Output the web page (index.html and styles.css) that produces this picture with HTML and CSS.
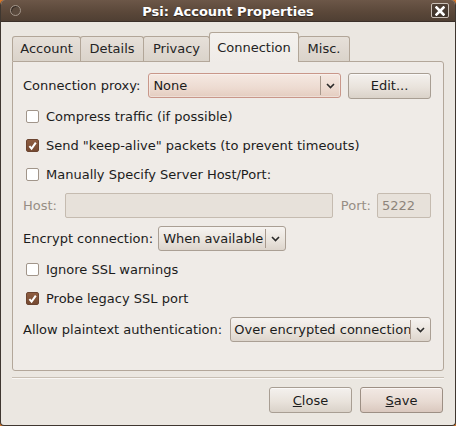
FILE: index.html
```html
<!DOCTYPE html>
<html>
<head>
<meta charset="utf-8">
<link rel="stylesheet" href="styles.css">
</head>
<body>
<div class="window">
  <div class="titlebar">
    <div class="tb-left"><span class="menu-btn"></span></div>
    <div class="title">Psi: Account Properties</div>
    <div class="tb-right">
      <span class="close-btn">
        <svg width="10" height="10" viewBox="0 0 10 10"><path d="M1.5 1.5 L8.5 8.5 M8.5 1.5 L1.5 8.5" stroke="#fff" stroke-width="2.6" stroke-linecap="square" fill="none"/></svg>
      </span>
    </div>
  </div>
  <div class="content">
    <div class="tabs">
      <div class="tab tab-account">Account</div>
      <div class="tab tab-details">Details</div>
      <div class="tab tab-privacy">Privacy</div>
      <div class="tab tab-connection active">Connection</div>
      <div class="tab tab-misc">Misc.</div>
    </div>
    <div class="panel">
      <div class="row">
        <span class="label">Connection proxy:</span>
        <div class="combo combo-hover grow">
          <span class="combo-text">None</span>
          <span class="combo-sep"></span>
          <span class="combo-arrow"><svg width="9" height="6" viewBox="0 0 9 6"><path d="M1 1 L4.5 4.5 L8 1" stroke="#2a2a2a" stroke-width="1.6" fill="none"/></svg></span>
        </div>
        <button class="btn edit-btn">Edit...</button>
      </div>
      <div class="check-row"><span class="box"></span><span>Compress traffic (if possible)</span></div>
      <div class="check-row"><span class="box checked"><svg width="12" height="12" viewBox="0 0 12 12"><path d="M2.6 6.2 L5 8.8 L9.6 2.4" stroke="#fff" stroke-width="2.2" fill="none"/></svg></span><span>Send "keep-alive" packets (to prevent timeouts)</span></div>
      <div class="check-row"><span class="box"></span><span>Manually Specify Server Host/Port:</span></div>
      <div class="row">
        <span class="label disabled">Host:</span>
        <div class="entry grow"></div>
        <span class="label disabled port-label">Port:</span>
        <div class="entry port-entry">5222</div>
      </div>
      <div class="row row-tight">
        <span class="label">Encrypt connection:</span>
        <div class="combo">
          <span class="combo-text">When available</span>
          <span class="combo-sep"></span>
          <span class="combo-arrow"><svg width="9" height="6" viewBox="0 0 9 6"><path d="M1 1 L4.5 4.5 L8 1" stroke="#2a2a2a" stroke-width="1.6" fill="none"/></svg></span>
        </div>
      </div>
      <div class="check-row"><span class="box"></span><span>Ignore SSL warnings</span></div>
      <div class="check-row"><span class="box checked"><svg width="12" height="12" viewBox="0 0 12 12"><path d="M2.6 6.2 L5 8.8 L9.6 2.4" stroke="#fff" stroke-width="2.2" fill="none"/></svg></span><span>Probe legacy SSL port</span></div>
      <div class="row">
        <span class="label">Allow plaintext authentication:</span>
        <div class="combo grow">
          <span class="combo-text">Over encrypted connection</span>
          <span class="combo-sep"></span>
          <span class="combo-arrow"><svg width="9" height="6" viewBox="0 0 9 6"><path d="M1 1 L4.5 4.5 L8 1" stroke="#2a2a2a" stroke-width="1.6" fill="none"/></svg></span>
        </div>
      </div>
    </div>
    <div class="separator"></div>
    <div class="actions">
      <button class="btn action-btn"><u>C</u>lose</button>
      <button class="btn action-btn default"><u>S</u>ave</button>
    </div>
  </div>
</div>
</body>
</html>
```
FILE: styles.css
```css
html, body {
  margin: 0;
  padding: 0;
}
body {
  width: 456px;
  height: 426px;
  background: #d9782a;
  font-family: "DejaVu Sans", sans-serif;
  font-size: 13px;
  color: #1c1c1c;
  overflow: hidden;
}
.window {
  width: 456px;
  height: 426px;
  box-sizing: border-box;
  border: 1px solid #3f3730;
  border-top: none;
  border-radius: 5px 5px 4px 4px;
  overflow: hidden;
  background: #ebe7e1;
  display: flex;
  flex-direction: column;
}
.titlebar {
  height: 22px;
  flex: none;
  background: linear-gradient(#6c5748, #5a4739 60%, #4f3f33);
  border-bottom: 1px solid #3b3029;
  box-sizing: border-box;
  display: grid;
  grid-template-columns: 1fr auto 1fr;
  align-items: center;
}
.tb-left {
  display: flex;
  padding-left: 9px;
}
.menu-btn {
  width: 9px;
  height: 9px;
  border-radius: 50%;
  border: 1px solid #a3968b;
  box-shadow: inset 1px 1px 0 rgba(0,0,0,0.4);
  background: #5b4a3d;
}
.title {
  color: #ffffff;
  font-weight: bold;
  font-size: 13px;
  text-shadow: 0 1px 1px rgba(0,0,0,0.5);
  padding-top: 1px;
}
.tb-right {
  display: flex;
  justify-content: flex-end;
  padding-right: 6px;
}
.close-btn {
  width: 18px;
  height: 15px;
  box-sizing: border-box;
  border: 1px solid #c9bfb6;
  border-radius: 2px;
  background: linear-gradient(#4e3f34, #3f332a);
  display: flex;
  align-items: center;
  justify-content: center;
}
.close-btn svg { display: block; }
.content {
  flex: 1;
  padding: 10px 11px 0 11px;
  display: flex;
  flex-direction: column;
}
.tabs {
  display: flex;
  align-items: flex-end;
  position: relative;
  z-index: 1;
}
.tab {
  height: 25px;
  box-sizing: border-box;
  padding: 0 0 2px 0;
  border: 1px solid #b2a698;
  border-bottom: none;
  border-radius: 3px 3px 0 0;
  margin-left: -1px;
  background: linear-gradient(#e6e0d9, #dad3ca);
  display: flex;
  align-items: center;
  justify-content: center;
  color: #242424;
  white-space: nowrap;
}
.tab-account { width: 69px; margin-left: 0; }
.tab-details { width: 64px; }
.tab-privacy { width: 67px; }
.tab-connection { width: 90px; }
.tab-misc { width: 52px; }
.tab.active {
  height: 30px;
  margin-bottom: -1px;
  padding: 0 0 1px 0;
  background: linear-gradient(#f4f1ee, #efebe7);
  border-color: #b2a698;
}
.panel {
  height: 310px;
  box-sizing: border-box;
  border: 1px solid #b3a79a;
  border-radius: 0 3px 3px 3px;
  background: #efebe7;
  padding: 11px 12px 0 10px;
  display: flex;
  flex-direction: column;
  gap: 8px;
}
.row {
  height: 25px;
  display: flex;
  align-items: center;
  gap: 8px;
}
.row-tight { gap: 5px; }
.label { white-space: nowrap; }
.label.disabled { color: #978e85; }
.port-label { margin-right: -2px; }
.grow { flex: 1; min-width: 0; }
.combo {
  height: 25px;
  box-sizing: border-box;
  border: 1px solid #aa9f94;
  border-radius: 3px;
  background: linear-gradient(#f6f3f0, #e9e3dc 60%, #ddd5cc);
  display: flex;
  align-items: center;
  padding-left: 4px;
  white-space: nowrap;
}
.combo-hover {
  border-color: #c9978a;
  background: linear-gradient(#f5e9e2, #eddbd1 60%, #e4cdc0);
  box-shadow: inset 0 0 0 1px rgba(255,255,255,0.35);
}
.combo-text {
  flex: 1;
  overflow: hidden;
  padding-right: 2px;
}
.row .grow .combo-text { min-width: 0; }
.combo-sep {
  width: 1px;
  height: 19px;
  background: #a8998d;
  flex: none;
}
.combo-arrow {
  width: 19px;
  flex: none;
  display: flex;
  justify-content: center;
  align-items: center;
  padding-top: 1px;
}
.combo-arrow svg { display: block; }
.btn {
  font-family: "DejaVu Sans", sans-serif;
  font-size: 13px;
  color: #1c1c1c;
  height: 26px;
  box-sizing: border-box;
  border: 1px solid #a89e93;
  border-radius: 3px;
  background: linear-gradient(#f4f1ee, #e9e3dc 55%, #dad2c9);
  box-shadow: inset 0 1px 0 rgba(255,255,255,0.6);
  padding: 0;
  margin: 0;
}
.edit-btn {
  width: 83px;
  flex: none;
  margin-left: -1px;
}
.check-row {
  height: 21px;
  display: flex;
  align-items: center;
  gap: 7px;
  padding-left: 3px;
}
.box {
  width: 13px;
  height: 13px;
  box-sizing: border-box;
  border: 1px solid #a1958a;
  border-radius: 2px;
  background: #ffffff;
  flex: none;
  display: flex;
  align-items: center;
  justify-content: center;
}
.box.checked {
  background: linear-gradient(#8e5d41, #764a32);
  border-color: #6b4430;
}
.box svg { display: block; }
.entry {
  height: 25px;
  box-sizing: border-box;
  border: 1px solid #c5bbb0;
  border-radius: 2px;
  background: #e7e1da;
  color: #8d847b;
  display: flex;
  align-items: center;
  padding-left: 4px;
}
.port-entry {
  width: 54px;
  flex: none;
}
.separator {
  margin-top: 6px;
  height: 1px;
  background: #c8bfb4;
  border-bottom: 1px solid #f9f7f5;
}
.actions {
  margin-top: 8px;
  display: flex;
  justify-content: flex-end;
  gap: 8px;
  padding-right: 1px;
}
.action-btn {
  width: 83px;
}
.action-btn.default {
  border-color: #9d8f84;
  background: linear-gradient(#f2e9e4, #e8dbd3 55%, #dac8be);
}
.row .grow:last-child { padding-left: 3px; }
.row .grow:last-child .combo-text { padding-right: 0; }
```
